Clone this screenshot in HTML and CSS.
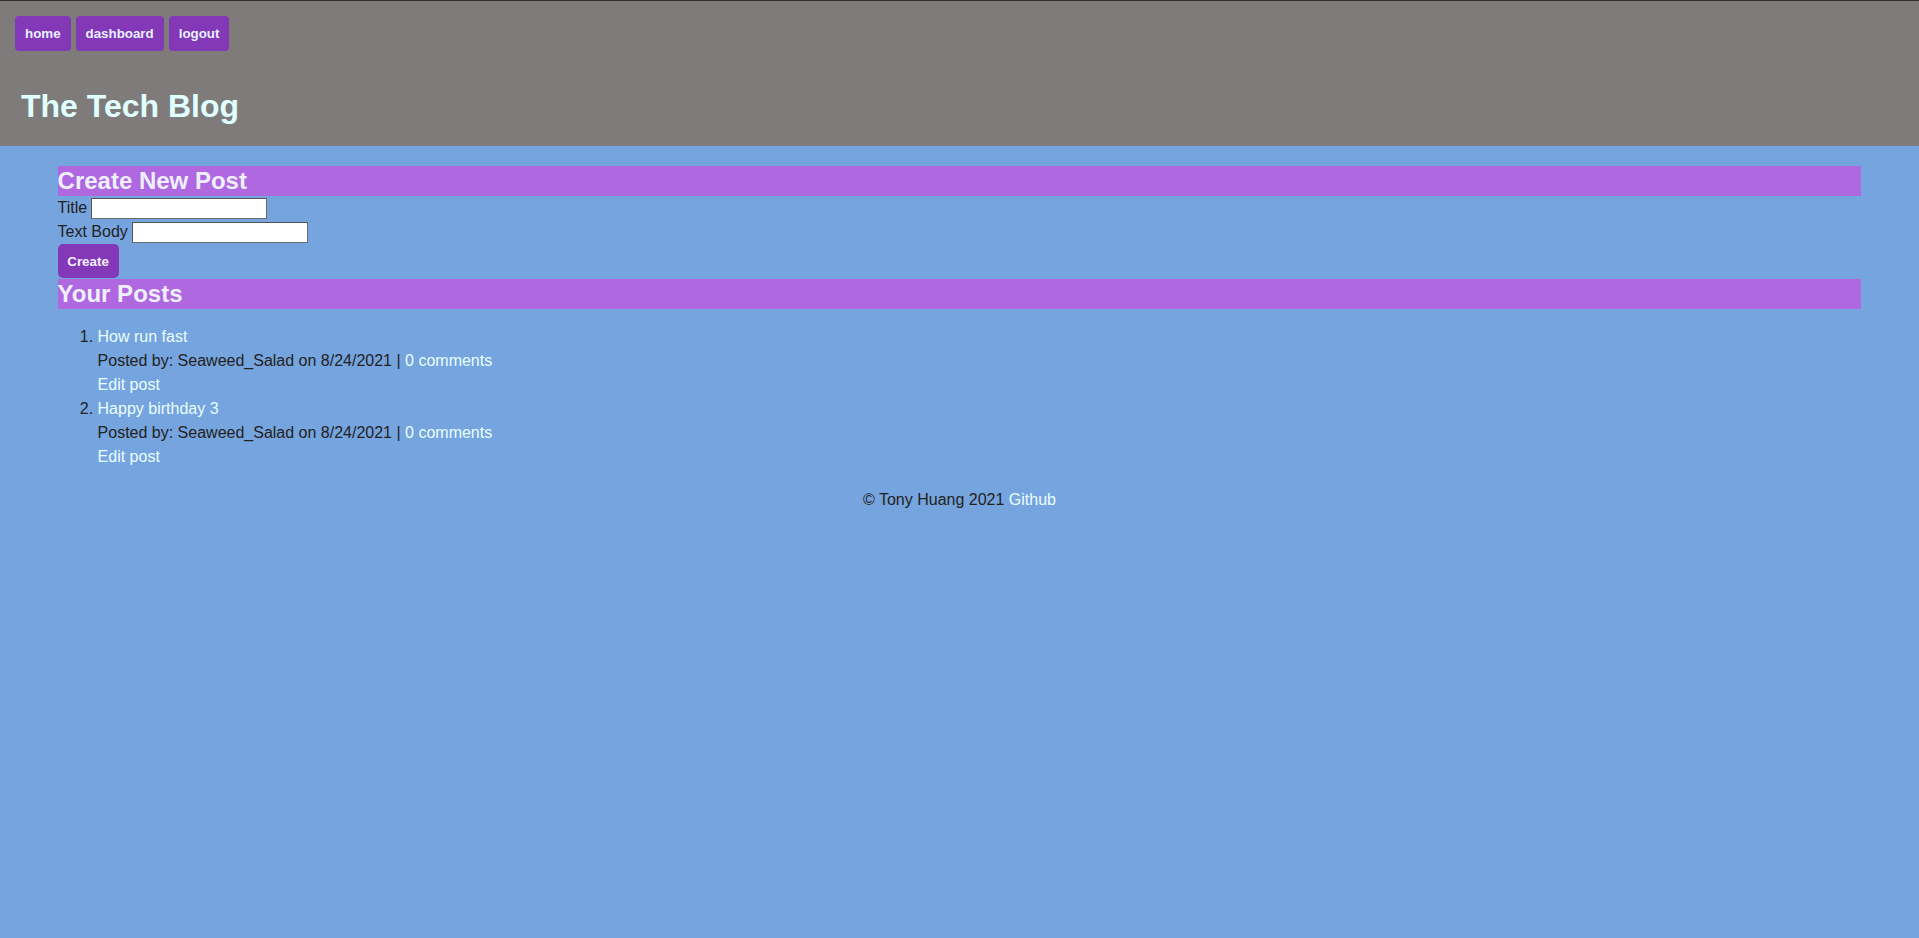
FILE: index.html
```html
<!DOCTYPE html>
<html lang="en">
<head>
<meta charset="utf-8">
<title>The Tech Blog</title>
<link rel="stylesheet" href="styles.css">
</head>
<body>
<header class="site-header">
  <nav class="nav">
    <a class="nav-btn" href="#">home</a>
    <a class="nav-btn" href="#">dashboard</a>
    <a class="nav-btn" href="#">logout</a>
  </nav>
  <h1 class="site-title">The Tech Blog</h1>
</header>
<main class="main">
  <h2 class="section-bar">Create New Post</h2>
  <form class="post-form">
    <div class="form-row"><label for="title">Title</label> <input id="title" class="text-input" type="text"></div>
    <div class="form-row"><label for="body">Text Body</label> <input id="body" class="text-input" type="text"></div>
    <button class="create-btn" type="button">Create</button>
  </form>
  <h2 class="section-bar">Your Posts</h2>
  <ol class="post-list">
    <li>
      <div><a class="link" href="#">How run fast</a></div>
      <div>Posted by: Seaweed_Salad on 8/24/2021 | <a class="link" href="#">0 comments</a></div>
      <div><a class="link" href="#">Edit post</a></div>
    </li>
    <li>
      <div><a class="link" href="#">Happy birthday 3</a></div>
      <div>Posted by: Seaweed_Salad on 8/24/2021 | <a class="link" href="#">0 comments</a></div>
      <div><a class="link" href="#">Edit post</a></div>
    </li>
  </ol>
</main>
<footer class="footer">© Tony Huang 2021 <a class="link" href="#">Github</a></footer>
</body>
</html>
```
FILE: styles.css
```css
html, body {
  margin: 0;
  padding: 0;
}
body {
  background: #76a4de;
  font-family: "Liberation Sans", Arial, sans-serif;
  font-size: 16px;
  color: #222;
  min-height: 938px;
}
.site-header {
  background: #7f7b7b;
  border-top: 1px solid #333;
  padding: 15px 15px 21px;
}
.nav {
  display: flex;
  gap: 5px;
}
.nav-btn {
  display: flex;
  align-items: center;
  height: 35px;
  padding: 0 10px;
  background: #8338b8;
  color: #e8f0ff;
  font-size: 13.333px;
  font-weight: bold;
  text-decoration: none;
  border-radius: 4px;
}
.site-title {
  margin: 37px 0 0 6px;
  font-size: 32px;
  line-height: 37px;
  color: #e0ffff;
}
.main {
  margin: 20px 3% 0;
}
.section-bar {
  margin: 0;
  background: #b068e0;
  color: #eef0ff;
  font-size: 24px;
  line-height: 30px;
  height: 30px;
}
.post-form {
  margin: 0;
}
.form-row {
  display: flex;
  align-items: center;
  gap: 4px;
  height: 24px;
}
.text-input {
  box-sizing: border-box;
  width: 176px;
  height: 21px;
  padding: 1px 2px;
  border: 1px solid #6b6b6b;
  border-top-color: #555;
  border-left-color: #555;
  background: #fff;
  font-size: 13px;
  margin: 0;
}
.create-btn {
  display: block;
  height: 34px;
  width: 61px;
  padding: 0;
  border: none;
  border-radius: 5px;
  background: #8338b8;
  color: #f4f0ff;
  font-family: "Liberation Sans", Arial, sans-serif;
  font-size: 13.333px;
  font-weight: bold;
  margin-bottom: 1px;
}
.post-list {
  margin: 16px 0 0;
  padding-left: 40px;
  line-height: 24px;
}
.link {
  color: #e8ffff;
  text-decoration: none;
}
.footer {
  text-align: center;
  margin-top: 19px;
  line-height: 24px;
}
```
